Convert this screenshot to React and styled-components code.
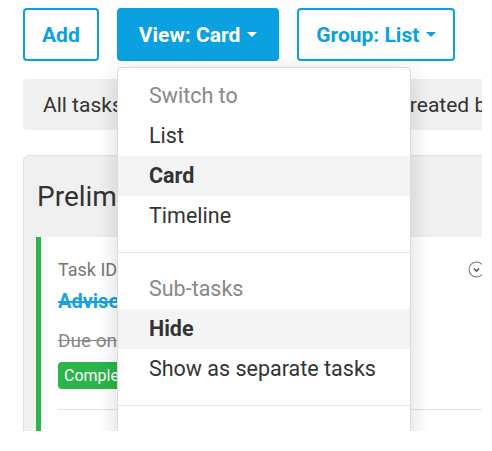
import React from 'react'
import styled, { createGlobalStyle } from 'styled-components'

const GlobalStyle = createGlobalStyle`
  body {
    margin: 0;
    background: #fff;
    font-family: Roboto, "Liberation Sans", sans-serif;
    color: #333;
  }
`

const blue = '#0ba0df'

const menu = [
  { title: 'Switch to', items: [{ label: 'List' }, { label: 'Card', active: true }, { label: 'Timeline' }] },
  { title: 'Sub-tasks', items: [{ label: 'Hide', active: true }, { label: 'Show as separate tasks' }] },
  { title: 'Sort by', items: [{ label: 'Due date' }] }
]

export default function App () {
  return (
    <>
      <GlobalStyle />
      <Page>
        <Toolbar>
          <Button>Add</Button>
          <Button primary>View: Card <Caret /></Button>
          <Button>Group: List <Caret /></Button>
        </Toolbar>
        <Filters>
          <Filter>All tasks</Filter>
          <Filter>Assigned to me</Filter>
          <Filter>Created by me</Filter>
        </Filters>
        <Panel>
          <PanelHeader>Preliminary work</PanelHeader>
          <PanelBody>
            <Task>
              <TaskTop>
                <TaskId>Task ID 1024</TaskId>
                <Toggle viewBox='0 0 16 16'>
                  <circle cx='8' cy='8' r='7' fill='none' stroke='#777' strokeWidth='1' />
                  <path d='M5.5 7l2.5 2.5L10.5 7' fill='none' stroke='#555' strokeWidth='1.4' />
                </Toggle>
              </TaskTop>
              <TaskTitle>Advise client on documents</TaskTitle>
              <Due>Due on 12 March 2020</Due>
              <Badge>Completed</Badge>
              <Divider />
            </Task>
          </PanelBody>
        </Panel>
        <Dropdown>
          {menu.map((section, i) => (
            <React.Fragment key={section.title}>
              {i > 0 && <MenuDivider />}
              <Section>
                <MenuTitle>{section.title}</MenuTitle>
                {section.items.map(item => (
                  <MenuItem key={item.label} active={item.active}>{item.label}</MenuItem>
                ))}
              </Section>
            </React.Fragment>
          ))}
        </Dropdown>
      </Page>
    </>
  )
}

const Page = styled.div`
  position: relative;
  width: 459px;
  height: 423px;
  padding: 8px 0 0 23px;
  overflow: hidden;
`

const Toolbar = styled.div`
  display: flex;
  gap: 18px;
`

const Button = styled.button`
  display: flex;
  align-items: center;
  gap: 7px;
  height: 53px;
  padding: 0 ${p => (p.primary ? '20px' : '17px')};
  border: 2px solid ${blue};
  border-radius: 4px;
  background: ${p => (p.primary ? blue : '#fff')};
  color: ${p => (p.primary ? '#fff' : blue)};
  font-family: Roboto, "Liberation Sans", sans-serif;
  font-size: 21px;
  font-weight: 700;
  white-space: nowrap;
  flex-shrink: 0;
`

const Caret = styled.span`
  width: 0;
  height: 0;
  border-left: 5px solid transparent;
  border-right: 5px solid transparent;
  border-top: 5px solid currentColor;
`

const Filters = styled.div`
  display: flex;
  align-items: center;
  gap: 64px;
  height: 51px;
  margin-top: 18px;
  padding: 0 20px;
  background: #f0f0f0;
  border-radius: 4px;
  width: 480px;
  box-sizing: border-box;
  white-space: nowrap;
  overflow: hidden;
`

const Filter = styled.span`
  font-size: 21px;
  color: #333;
  flex-shrink: 0;
`

const Panel = styled.div`
  margin-top: 25px;
  width: 480px;
  height: 300px;
  background: #f0f0f0;
  border: 1px solid #e2e2e2;
  border-radius: 5px;
  box-sizing: border-box;
`

const PanelHeader = styled.h2`
  margin: 0;
  height: 81px;
  display: flex;
  align-items: center;
  padding-left: 13px;
  font-size: 28px;
  font-weight: 400;
  color: #333;
  white-space: nowrap;
`

const PanelBody = styled.div`
  padding-left: 12px;
`

const Task = styled.div`
  background: #fff;
  border-left: 5px solid #2bb54b;
  padding: 22px 0 0 17px;
  height: 200px;
`

const TaskTop = styled.div`
  display: flex;
  align-items: center;
  justify-content: space-between;
  padding-right: 17px;
`

const TaskId = styled.span`
  font-size: 18px;
  color: #777;
`

const Toggle = styled.svg`
  width: 17px;
  height: 17px;
`

const TaskTitle = styled.div`
  margin-top: 9px;
  font-size: 20px;
  font-weight: 700;
  color: #15a2dd;
  text-decoration: line-through;
  white-space: nowrap;
`

const Due = styled.div`
  margin-top: 16px;
  font-size: 19px;
  color: #888;
  text-decoration: line-through;
  white-space: nowrap;
`

const Badge = styled.span`
  display: inline-block;
  margin-top: 10px;
  padding: 4px 6px;
  background: #2bb54b;
  color: #fff;
  font-size: 16px;
  border-radius: 4px;
`

const Divider = styled.hr`
  margin: 20px 0 0;
  border: 0;
  border-top: 1px solid #e4e4e4;
`

const Dropdown = styled.div`
  position: absolute;
  left: 117px;
  top: 67px;
  width: 294px;
  background: #fff;
  border: 1px solid #dcdcdc;
  border-radius: 4px;
  box-shadow: 0 6px 22px rgba(0, 0, 0, 0.16);
  box-sizing: border-box;
`

const Section = styled.div`
  padding: 8px 0;
`

const MenuTitle = styled.div`
  height: 40px;
  line-height: 40px;
  padding-left: 31px;
  font-size: 21.5px;
  color: #888;
`

const MenuItem = styled.div`
  height: 40px;
  line-height: 40px;
  padding-left: 31px;
  font-size: 21.5px;
  font-weight: ${p => (p.active ? 700 : 400)};
  background: ${p => (p.active ? '#f4f4f4' : '#fff')};
  color: #333;
  white-space: nowrap;
`

const MenuDivider = styled.div`
  height: 1px;
  margin: 8px 0;
  background: #e6e6e6;
`
